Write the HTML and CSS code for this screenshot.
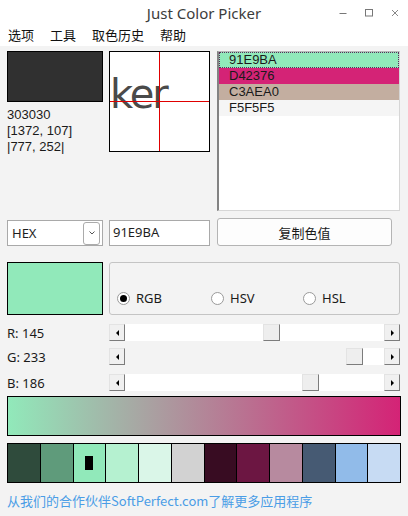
FILE: index.html
```html
<!DOCTYPE html>
<html lang="zh-CN">
<head>
<meta charset="utf-8">
<title>Just Color Picker</title>
<link rel="stylesheet" href="styles.css">
</head>
<body>
<header class="titlebar">
  <span></span>
  <span class="title">Just Color Picker</span>
  <div class="winctl">
    <svg width="8" height="8" viewBox="0 0 8 8"><path d="M0.5 4.5h7" stroke="#777" stroke-width="1"/></svg>
    <svg width="8" height="8" viewBox="0 0 8 8"><rect x="0.5" y="0.5" width="7" height="6.5" fill="none" stroke="#777" stroke-width="1"/></svg>
    <svg width="8" height="8" viewBox="0 0 8 8"><path d="M1 1l6 6M7 1l-6 6" stroke="#888" stroke-width="1"/></svg>
  </div>
</header>
<nav class="menubar">
  <span>选项</span><span>工具</span><span>取色历史</span><span>帮助</span>
</nav>
<main class="content">
  <section class="row-top">
    <div class="col-left">
      <div class="swatch swatch-dark"></div>
      <div class="info">
        <div>303030</div>
        <div>[1372, 107]</div>
        <div>|777, 252|</div>
      </div>
    </div>
    <div class="magnifier">
      <span class="zoomtext">ker</span>
      <i class="cross-v"></i>
      <i class="cross-h"></i>
    </div>
    <ul class="history">
      <li class="hist-1 focused">91E9BA</li>
      <li class="hist-2">D42376</li>
      <li class="hist-3">C3AEA0</li>
      <li class="hist-4">F5F5F5</li>
    </ul>
  </section>

  <section class="row-controls">
    <div class="combo">
      <span>HEX</span>
      <span class="combo-btn">
        <svg width="8" height="6" viewBox="0 0 8 6"><path d="M1.5 1.5l2.5 2.5 2.5-2.5" fill="none" stroke="#555" stroke-width="1"/></svg>
      </span>
    </div>
    <div class="hexinput">91E9BA</div>
    <button class="copybtn">复制色值</button>
  </section>

  <section class="row-mode">
    <div class="swatch swatch-current"></div>
    <div class="groupbox">
      <label class="radio"><span class="dot checked"></span>RGB</label>
      <label class="radio"><span class="dot"></span>HSV</label>
      <label class="radio"><span class="dot"></span>HSL</label>
    </div>
  </section>

  <div class="slider-row row-r">
    <span class="slabel">R: 145</span>
    <div class="scrollbar">
      <span class="sb-btn"><i class="arr-left"></i></span>
      <span class="sb-track"><span class="sb-thumb" style="left:138px"></span></span>
      <span class="sb-btn"><i class="arr-right"></i></span>
    </div>
  </div>
  <div class="slider-row row-g">
    <span class="slabel">G: 233</span>
    <div class="scrollbar">
      <span class="sb-btn"><i class="arr-left"></i></span>
      <span class="sb-track sb-active"><span class="sb-thumb" style="left:221px"></span></span>
      <span class="sb-btn"><i class="arr-right"></i></span>
    </div>
  </div>
  <div class="slider-row row-b">
    <span class="slabel">B: 186</span>
    <div class="scrollbar">
      <span class="sb-btn"><i class="arr-left"></i></span>
      <span class="sb-track"><span class="sb-thumb" style="left:177px"></span></span>
      <span class="sb-btn"><i class="arr-right"></i></span>
    </div>
  </div>

  <div class="gradient"></div>

  <div class="palette">
    <span class="c1"></span>
    <span class="c2"></span>
    <span class="c3"><i class="marker"></i></span>
    <span class="c4"></span>
    <span class="c5"></span>
    <span class="c6"></span>
    <span class="c7"></span>
    <span class="c8"></span>
    <span class="c9"></span>
    <span class="c10"></span>
    <span class="c11"></span>
    <span class="c12"></span>
  </div>

  <a class="link" href="#">从我们的合作伙伴SoftPerfect.com了解更多应用程序</a>
</main>
</body>
</html>
```

FILE: styles.css
```css
* { box-sizing: border-box; }

html, body {
  margin: 0;
  padding: 0;
}

body {
  width: 408px;
  height: 516px;
  overflow: hidden;
  background: #f3f3f3;
  font-family: "Noto Sans", "Noto Sans CJK SC", sans-serif;
  font-size: 13px;
  color: #1e1e1e;
}

/* title bar */
.titlebar {
  height: 22px;
  background: #fff;
  display: grid;
  grid-template-columns: 1fr auto 1fr;
  align-items: center;
  padding-top: 3px;
}
.title {
  font-size: 15px;
  line-height: 20px;
  color: #3c3c3c;
}
.winctl {
  justify-self: end;
  display: flex;
  gap: 18px;
  padding-right: 9px;
  align-items: center;
}
.winctl svg { display: block; }

/* menu */
.menubar {
  height: 24px;
  background: #fff;
  display: flex;
  gap: 16px;
  padding-left: 8px;
  align-items: center;
  font-family: "Noto Sans CJK SC", sans-serif;
  font-size: 13px;
  line-height: 18px;
  color: #111;
  padding-top: 2px;
}

/* content */
.content {
  padding: 5px 7px 0 7px;
}

.row-top {
  display: flex;
  align-items: flex-start;
}
.col-left {
  width: 96px;
}
.swatch {
  border: 1px solid #000;
}
.swatch-dark {
  height: 51px;
  background: #303030;
}
.info {
  margin-top: 5px;
  line-height: 16px;
  font-family: "Liberation Sans", sans-serif;
  font-size: 13px;
  color: #1a1a1a;
}

.magnifier {
  position: relative;
  width: 101px;
  height: 101px;
  margin-left: 6px;
  background: #fff;
  border: 1px solid #000;
  overflow: hidden;
}
.zoomtext {
  position: absolute;
  left: 0;
  top: 22px;
  font-family: "DejaVu Sans", sans-serif;
  font-size: 40px;
  line-height: 40px;
  color: #4a4a4a;
  letter-spacing: -2px;
}
.cross-v {
  position: absolute;
  left: 49px;
  top: 0;
  width: 1px;
  height: 100%;
  background: #e00000;
}
.cross-h {
  position: absolute;
  top: 49px;
  left: 0;
  height: 1px;
  width: 100%;
  background: #e00000;
}

.history {
  list-style: none;
  margin: 0 0 0 7px;
  padding: 0;
  width: 183px;
  height: 160px;
  background: #fff;
  border: 1px solid #d6d6d6;
  border-top-color: #b9b9b9;
  border-left: 2px solid #838383;
}
.history li {
  height: 16px;
  line-height: 16px;
  padding-left: 10px;
  font-family: "Liberation Sans", sans-serif;
  font-size: 13px;
  color: #1a1a1a;
}
.hist-1 { background: #91e9ba; }
.hist-2 { background: #d42376; }
.hist-3 { background: #c3aea0; }
.hist-4 { background: #f5f5f5; }
.focused { outline: 1px dotted #5a2a5a; outline-offset: -1px; }

/* controls row */
.row-controls {
  display: flex;
  align-items: flex-end;
  margin-top: 7px;
}
.combo {
  width: 96px;
  height: 26px;
  background: #fff;
  border: 1px solid #a9a9a9;
  display: flex;
  align-items: center;
  justify-content: space-between;
  padding: 0 2px 0 4px;
  font-size: 13px;
}
.combo-btn {
  width: 17px;
  height: 23px;
  border: 1px solid #ababab;
  border-radius: 3px;
  display: flex;
  align-items: center;
  justify-content: center;
  background: #fff;
}
.combo-btn svg { display: block; }
.hexinput {
  width: 101px;
  height: 26px;
  margin-left: 6px;
  background: #fff;
  border: 1px solid #a9a9a9;
  padding-left: 3px;
  line-height: 23px;
  font-size: 13px;
}
.copybtn {
  width: 175px;
  height: 28px;
  margin-left: 7px;
  background: #fdfdfd;
  border: 1px solid #b4b4b4;
  border-radius: 3px;
  font-family: "Noto Sans CJK SC", sans-serif;
  font-size: 13px;
  color: #1a1a1a;
  padding: 0;
}

/* mode row */
.row-mode {
  display: flex;
  margin-top: 16px;
}
.swatch-current {
  width: 96px;
  height: 53px;
  background: #91e9ba;
}
.groupbox {
  width: 291px;
  height: 53px;
  margin-left: 6px;
  border: 1px solid #c4c4c4;
  border-radius: 3px;
  display: flex;
  align-items: flex-end;
  padding: 0 0 7px 7px;
}
.radio {
  display: flex;
  align-items: center;
  width: 94px;
  font-size: 13px;
  line-height: 18px;
  color: #1a1a1a;
}
.radio:nth-child(2) { width: 92px; }
.dot {
  width: 13px;
  height: 13px;
  border-radius: 50%;
  border: 1px solid #9a9a9a;
  background: #fff;
  margin-right: 6px;
  display: flex;
  align-items: center;
  justify-content: center;
}
.dot.checked::after {
  content: "";
  width: 7px;
  height: 7px;
  border-radius: 50%;
  background: #000;
}

/* sliders */
.slider-row {
  display: flex;
  align-items: center;
  height: 17px;
}
.row-r { margin-top: 9px; }
.row-g { margin-top: 7px; }
.row-b { margin-top: 9px; }
.slabel {
  width: 102px;
  font-size: 13px;
  color: #1a1a1a;
}
.scrollbar {
  display: flex;
  width: 291px;
  height: 17px;
}
.sb-btn {
  width: 16px;
  height: 17px;
  background: #f0f0f0;
  border: 1px solid;
  border-color: #e3e3e3 #7c7c7c #7c7c7c #e3e3e3;
  display: flex;
  align-items: center;
  justify-content: center;
}
.arr-left {
  width: 0;
  height: 0;
  border-top: 3px solid transparent;
  border-bottom: 3px solid transparent;
  border-right: 3px solid #000;
}
.arr-right {
  width: 0;
  height: 0;
  border-top: 3px solid transparent;
  border-bottom: 3px solid transparent;
  border-left: 3px solid #000;
}
.sb-track {
  flex: 1;
  position: relative;
  background: #fff;
}
.sb-active {
  background: linear-gradient(to right, #f3f3f3 238px, #fff 238px);
}
.sb-thumb {
  position: absolute;
  top: 0;
  width: 17px;
  height: 17px;
  background: #eeeeee;
  border: 1px solid;
  border-color: #e3e3e3 #7c7c7c #7c7c7c #e3e3e3;
}

/* gradient + palette */
.gradient {
  margin-top: 5px;
  width: 394px;
  height: 40px;
  border: 1px solid #000;
  background: linear-gradient(to right, #91e9ba, #d42376);
}
.palette {
  margin-top: 7px;
  width: 394px;
  height: 40px;
  border: 1px solid #000;
  background: #000;
  display: grid;
  grid-template-columns: repeat(12, 1fr);
  gap: 1px;
}
.palette span {
  display: flex;
  align-items: center;
  justify-content: center;
}
.c1 { background: #2f4b3c; }
.c2 { background: #5f9b7b; }
.c3 { background: #91e9ba; }
.c4 { background: #b5f1d0; }
.c5 { background: #daf6e8; }
.c6 { background: #d2d2d2; }
.c7 { background: #380c22; }
.c8 { background: #6c1642; }
.c9 { background: #b78a9f; }
.c10 { background: #465a73; }
.c11 { background: #91bbe9; }
.c12 { background: #c7dbf3; }
.marker {
  width: 8px;
  height: 14px;
  background: #000;
}

.link {
  display: block;
  margin-top: 9px;
  font-family: "Noto Sans CJK SC", sans-serif;
  font-size: 13px;
  line-height: 18px;
  color: #4a9de6;
  text-decoration: none;
}
```
